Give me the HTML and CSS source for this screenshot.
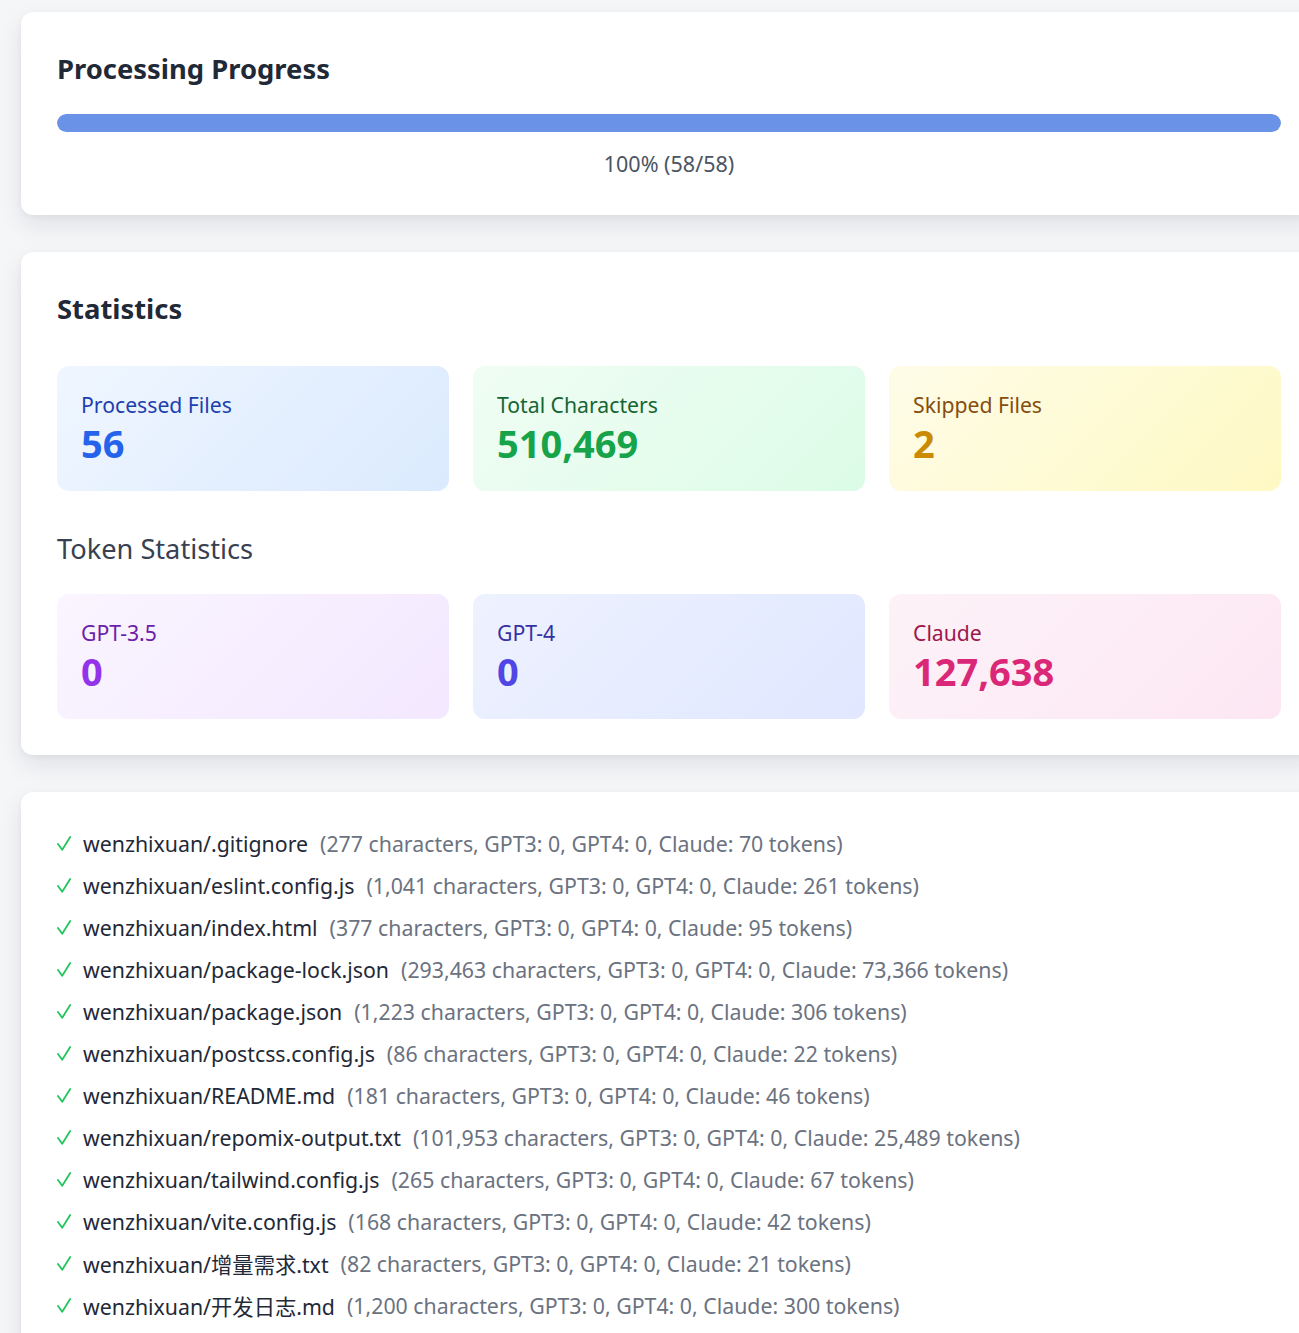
FILE: index.html
```html
<!DOCTYPE html>
<html lang="en">
<head>
<meta charset="utf-8">
<title>Processing</title>
<link rel="stylesheet" href="styles.css">
</head>
<body>
<main class="page">
  <section class="card">
    <h2 class="card-title">Processing Progress</h2>
    <div class="progress-track"><div class="progress-fill" style="width:100%"></div></div>
    <p class="progress-text">100% (58/58)</p>
  </section>

  <section class="card">
    <h2 class="card-title title-gap">Statistics</h2>
    <div class="stat-grid">
      <div class="stat stat-blue"><div class="stat-label">Processed Files</div><div class="stat-value">56</div></div>
      <div class="stat stat-green"><div class="stat-label">Total Characters</div><div class="stat-value">510,469</div></div>
      <div class="stat stat-yellow"><div class="stat-label">Skipped Files</div><div class="stat-value">2</div></div>
    </div>
    <h3 class="sub-title">Token Statistics</h3>
    <div class="stat-grid">
      <div class="stat stat-purple"><div class="stat-label">GPT-3.5</div><div class="stat-value">0</div></div>
      <div class="stat stat-indigo"><div class="stat-label">GPT-4</div><div class="stat-value">0</div></div>
      <div class="stat stat-pink"><div class="stat-label">Claude</div><div class="stat-value">127,638</div></div>
    </div>
  </section>

  <section class="card">
    <ul class="file-list">
      <li class="file-row"><svg class="check" viewBox="0 0 14 15"><path d="M1 8 L5.2 13.8 L13.2 1"/></svg><span class="file-name">wenzhixuan/.gitignore</span><span class="file-info">(277 characters, GPT3: 0, GPT4: 0, Claude: 70 tokens)</span></li>
      <li class="file-row"><svg class="check" viewBox="0 0 14 15"><path d="M1 8 L5.2 13.8 L13.2 1"/></svg><span class="file-name">wenzhixuan/eslint.config.js</span><span class="file-info">(1,041 characters, GPT3: 0, GPT4: 0, Claude: 261 tokens)</span></li>
      <li class="file-row"><svg class="check" viewBox="0 0 14 15"><path d="M1 8 L5.2 13.8 L13.2 1"/></svg><span class="file-name">wenzhixuan/index.html</span><span class="file-info">(377 characters, GPT3: 0, GPT4: 0, Claude: 95 tokens)</span></li>
      <li class="file-row"><svg class="check" viewBox="0 0 14 15"><path d="M1 8 L5.2 13.8 L13.2 1"/></svg><span class="file-name">wenzhixuan/package-lock.json</span><span class="file-info">(293,463 characters, GPT3: 0, GPT4: 0, Claude: 73,366 tokens)</span></li>
      <li class="file-row"><svg class="check" viewBox="0 0 14 15"><path d="M1 8 L5.2 13.8 L13.2 1"/></svg><span class="file-name">wenzhixuan/package.json</span><span class="file-info">(1,223 characters, GPT3: 0, GPT4: 0, Claude: 306 tokens)</span></li>
      <li class="file-row"><svg class="check" viewBox="0 0 14 15"><path d="M1 8 L5.2 13.8 L13.2 1"/></svg><span class="file-name">wenzhixuan/postcss.config.js</span><span class="file-info">(86 characters, GPT3: 0, GPT4: 0, Claude: 22 tokens)</span></li>
      <li class="file-row"><svg class="check" viewBox="0 0 14 15"><path d="M1 8 L5.2 13.8 L13.2 1"/></svg><span class="file-name">wenzhixuan/README.md</span><span class="file-info">(181 characters, GPT3: 0, GPT4: 0, Claude: 46 tokens)</span></li>
      <li class="file-row"><svg class="check" viewBox="0 0 14 15"><path d="M1 8 L5.2 13.8 L13.2 1"/></svg><span class="file-name">wenzhixuan/repomix-output.txt</span><span class="file-info">(101,953 characters, GPT3: 0, GPT4: 0, Claude: 25,489 tokens)</span></li>
      <li class="file-row"><svg class="check" viewBox="0 0 14 15"><path d="M1 8 L5.2 13.8 L13.2 1"/></svg><span class="file-name">wenzhixuan/tailwind.config.js</span><span class="file-info">(265 characters, GPT3: 0, GPT4: 0, Claude: 67 tokens)</span></li>
      <li class="file-row"><svg class="check" viewBox="0 0 14 15"><path d="M1 8 L5.2 13.8 L13.2 1"/></svg><span class="file-name">wenzhixuan/vite.config.js</span><span class="file-info">(168 characters, GPT3: 0, GPT4: 0, Claude: 42 tokens)</span></li>
      <li class="file-row"><svg class="check" viewBox="0 0 14 15"><path d="M1 8 L5.2 13.8 L13.2 1"/></svg><span class="file-name">wenzhixuan/增量需求.txt</span><span class="file-info">(82 characters, GPT3: 0, GPT4: 0, Claude: 21 tokens)</span></li>
      <li class="file-row"><svg class="check" viewBox="0 0 14 15"><path d="M1 8 L5.2 13.8 L13.2 1"/></svg><span class="file-name">wenzhixuan/开发日志.md</span><span class="file-info">(1,200 characters, GPT3: 0, GPT4: 0, Claude: 300 tokens)</span></li>
    </ul>
  </section>
</main>
</body>
</html>
```
FILE: styles.css
```css
html { overflow: hidden; }
body {
  margin: 0;
  background: #f5f6f8;
  font-family: "Noto Sans", "Noto Sans CJK SC", sans-serif;
  color: #1f2937;
}
.page {
  padding: 12px 0 0 21px;
  width: 1296px;
}
.card {
  background: #ffffff;
  border-radius: 12px;
  padding: 36px;
  margin-bottom: 37px;
  box-shadow: 0 10px 24px rgba(15, 23, 42, 0.09), 0 2px 6px rgba(15, 23, 42, 0.04);
}
.card-title {
  margin: 0;
  font-size: 27.4px;
  line-height: 42px;
  font-weight: 700;
  color: #1f2937;
}
.title-gap { margin-bottom: 36px; }
.progress-track {
  margin-top: 24px;
  height: 18px;
  border-radius: 9px;
  background: #e5e7eb;
  overflow: hidden;
}
.progress-fill {
  height: 100%;
  background: #6a93e8;
  border-radius: 9px;
}
.progress-text {
  margin: 17px 0 0;
  text-align: center;
  font-size: 21.5px;
  line-height: 30px;
  color: #4b5563;
}
.stat-grid {
  display: grid;
  grid-template-columns: repeat(3, 1fr);
  gap: 24px;
}
.stat {
  border-radius: 12px;
  padding: 24px;
}
.stat-label {
  font-size: 21.2px;
  line-height: 30px;
}
.stat-value {
  font-size: 38px;
  line-height: 47px;
  font-weight: 700;
}
.stat-blue { background: linear-gradient(135deg, #eff6ff, #dbeafe); }
.stat-blue .stat-label { color: #1e40af; }
.stat-blue .stat-value { color: #2563eb; }
.stat-green { background: linear-gradient(135deg, #f0fdf4, #dcfce7); }
.stat-green .stat-label { color: #166534; }
.stat-green .stat-value { color: #16a34a; }
.stat-yellow { background: linear-gradient(135deg, #fefce8, #fef9c3); }
.stat-yellow .stat-label { color: #854d0e; }
.stat-yellow .stat-value { color: #ca8a04; }
.stat-purple { background: linear-gradient(135deg, #faf5ff, #f3e8ff); }
.stat-purple .stat-label { color: #6b21a8; }
.stat-purple .stat-value { color: #9333ea; }
.stat-indigo { background: linear-gradient(135deg, #eef2ff, #e0e7ff); }
.stat-indigo .stat-label { color: #3730a3; }
.stat-indigo .stat-value { color: #4f46e5; }
.stat-pink { background: linear-gradient(135deg, #fdf2f8, #fce7f3); }
.stat-pink .stat-label { color: #9d174d; }
.stat-pink .stat-value { color: #db2777; }
.sub-title {
  margin: 40px 0 27px;
  font-size: 27.2px;
  line-height: 36px;
  font-weight: 400;
  color: #374151;
}
.file-list {
  list-style: none;
  margin: 0;
  padding: 0;
  display: flex;
  flex-direction: column;
  gap: 12px;
}
.file-row {
  display: flex;
  align-items: center;
  height: 30px;
  font-size: 21.3px;
  white-space: nowrap;
}
.check {
  width: 14px;
  height: 15px;
  margin-right: 12px;
  fill: none;
  stroke: #22c55e;
  stroke-width: 1.8;
  stroke-linecap: round;
  stroke-linejoin: round;
}
.file-name { color: #1f2937; }
.file-info { color: #6b7280; margin-left: 12px; }
```
